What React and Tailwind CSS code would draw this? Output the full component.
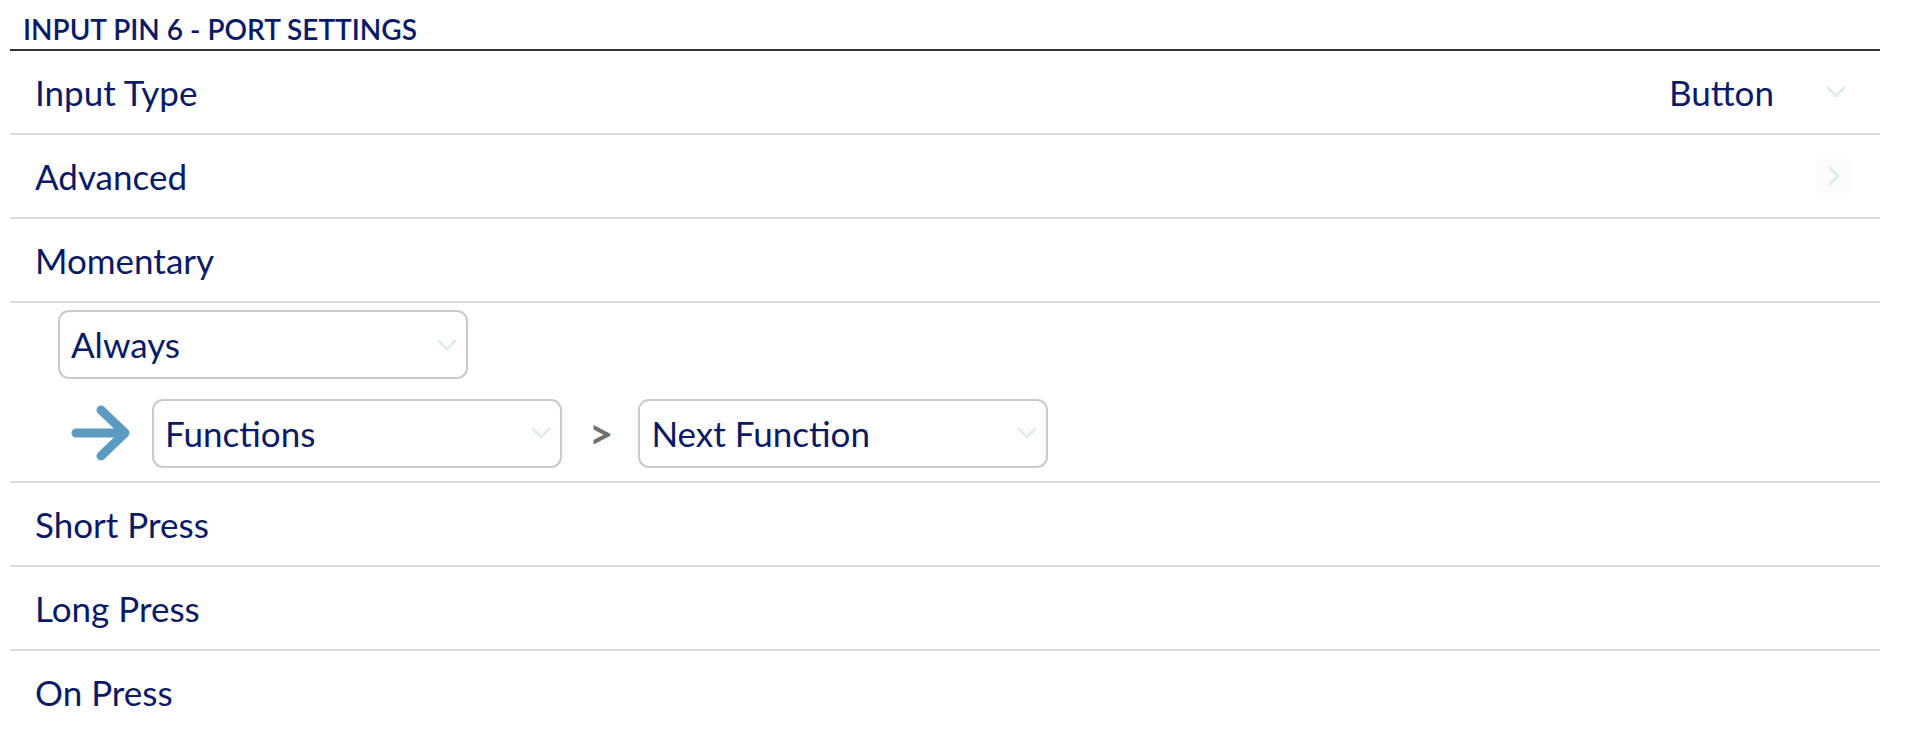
import { ChevronDown, ChevronRight } from 'lucide-react';

const ROWS_TOP = [
  { label: 'Input Type', value: 'Button', icon: 'down' },
  { label: 'Advanced', icon: 'right' },
  { label: 'Momentary' },
];

const ROWS_BOTTOM = ['Short Press', 'Long Press', 'On Press'];

function Row({ label, value, icon }) {
  return (
    <div className="flex h-[84px] items-center border-b-2 border-[#dcdcdc] pl-[25px] pr-[28px]">
      <span className="text-[35px] leading-none">{label}</span>
      <div className="ml-auto flex items-center">
        {value && <span className="mr-[46px] text-[35px] leading-none">{value}</span>}
        {icon === 'down' && <ChevronDown className="h-[32px] w-[32px] text-[#dfece8]" strokeWidth={2} />}
        {icon === 'right' && (
          <div className="flex h-[36px] w-[36px] items-center justify-center bg-[#fcfcfc]">
            <ChevronRight className="h-[32px] w-[32px] text-[#dfece8]" strokeWidth={2} />
          </div>
        )}
      </div>
    </div>
  );
}

function FakeSelect({ value }) {
  return (
    <div className="flex h-[69px] w-[410px] items-center rounded-[11px] border-2 border-[#cacaca] bg-white pl-[11px] pr-[3px]">
      <span className="text-[35px] leading-none">{value}</span>
      <ChevronDown className="ml-auto h-[32px] w-[32px] text-[#dfece8]" strokeWidth={2} />
    </div>
  );
}

export default function App() {
  return (
    <div className="min-h-[730px] bg-white font-['Lato',sans-serif] text-[#0b1a66]">
      <div className="ml-[10px] w-[1870px]">
        {/* Header */}
        <div className="flex h-[51px] items-end border-b-2 border-[#333333] pb-[6px] pl-[13px]">
          <h2 className="text-[28px] font-semibold leading-none">INPUT PIN 6 - PORT SETTINGS</h2>
        </div>

        {ROWS_TOP.map((r) => (
          <Row key={r.label} {...r} />
        ))}

        {/* Momentary expanded */}
        <div className="flex h-[180px] flex-col border-b-2 border-[#dcdcdc] pl-[48px] pt-[7px]">
          <FakeSelect value="Always" />
          <div className="mt-[19px] flex items-center">
            <svg width="70" height="70" viewBox="0 0 70 70" className="ml-[5px] mr-[19px]">
              <g fill="none" stroke="#5b9bc2" strokeWidth="9" strokeLinecap="round" strokeLinejoin="round">
                <path d="M13 35 H60" />
                <path d="M38 12 L62 35 L38 58" />
              </g>
            </svg>
            <FakeSelect value="Functions" />
            <span className="ml-[27px] mr-[25px] text-[42px] font-bold leading-none text-[#707070]">&gt;</span>
            <FakeSelect value="Next Function" />
          </div>
        </div>

        {ROWS_BOTTOM.map((l) => (
          <Row key={l} label={l} />
        ))}
      </div>
    </div>
  );
}
